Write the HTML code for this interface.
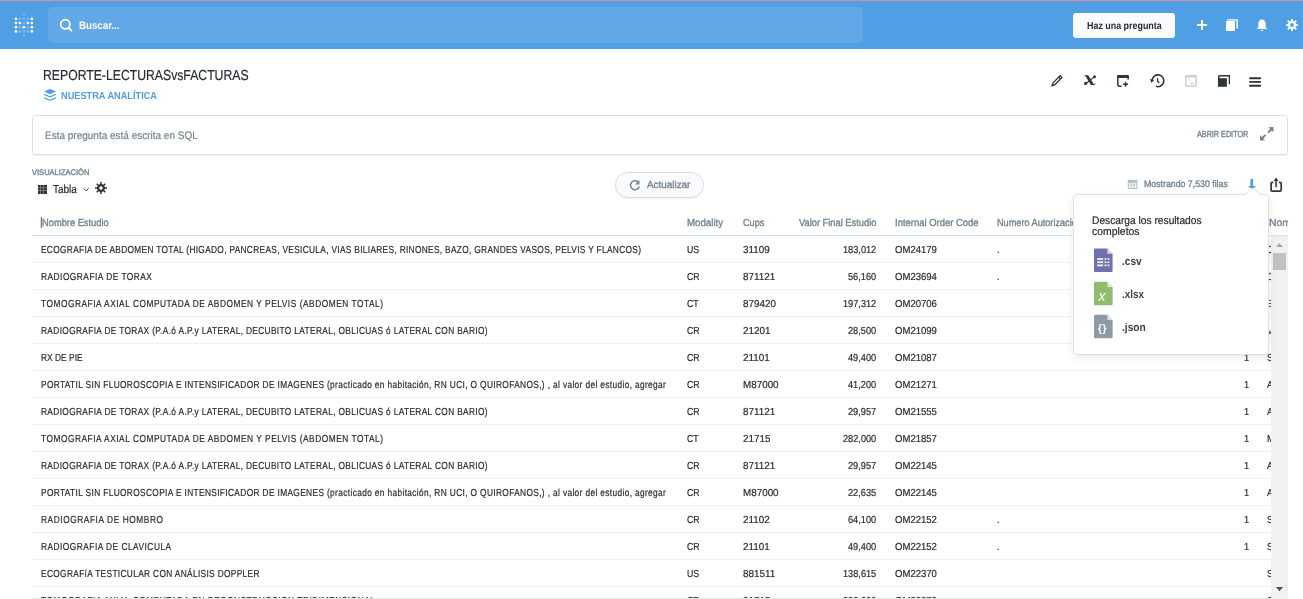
<!DOCTYPE html>
<html><head><meta charset="utf-8"><style>
html,body{margin:0;padding:0;width:1303px;height:599px;overflow:hidden;background:#fff;}
body{position:relative;font-family:"Liberation Sans",sans-serif;}
.t{position:absolute;white-space:nowrap;transform-origin:0 0;text-rendering:geometricPrecision;}
.sk{-webkit-text-stroke:0.2px currentColor;}
.sm{-webkit-text-stroke:0.35px currentColor;}
.rl{position:absolute;height:1px;background:#f0f0f0;}
#pink{position:absolute;left:0;top:0;width:1303px;height:1px;background:#d08fa2;}
#nav{position:absolute;left:0;top:1px;width:1303px;height:48px;background:#509ee3;}
#search{position:absolute;left:48px;top:7px;width:815px;height:36px;border-radius:5px;background:#62a8e6;}
#ask{position:absolute;left:1073px;top:13px;width:102px;height:25px;border-radius:3px;background:#f9fbfc;}
#sql{position:absolute;left:32px;top:115px;width:1254px;height:38px;border:1px solid #dce1e4;border-radius:3px;box-shadow:0 1px 1px rgba(0,0,0,.06);}
#refresh{position:absolute;left:615px;top:172px;width:87px;height:24px;border:1px solid #d9dee2;border-radius:13px;background:#f9fbfc;box-shadow:0 1px 1px rgba(0,0,0,.05);}
#hdrline{z-index:4;position:absolute;left:32px;top:235px;width:1256px;height:1px;background:#dce1e4;}
#sb{z-index:3;position:absolute;left:1271px;top:236px;width:17px;height:363px;background:#f1f1f1;}
#thumb{z-index:3;position:absolute;left:1273px;top:253px;width:13px;height:17px;background:#c1c1c1;}
#botline{position:absolute;left:32px;top:598px;width:1239px;height:1px;background:#e6e6e6;z-index:4;}
#pop{position:absolute;left:1073px;top:194px;width:194px;height:159px;background:#fff;border:1px solid #dfe3e7;border-radius:4px;box-shadow:0 3px 8px rgba(0,0,0,.08);z-index:10;}
#arrow{position:absolute;left:1247.7px;top:190.5px;width:10.6px;height:10.6px;background:#fff;border-left:1px solid #dfe3e7;border-top:1px solid #dfe3e7;transform:rotate(45deg);z-index:11;}
svg.ov{position:absolute;left:0;top:0;}
</style></head><body>
<div id="pink"></div>
<div id="nav"></div>
<div id="search"></div>
<div id="ask"></div>
<div id="sql"></div>
<div id="refresh"></div>
<div class="rl" style="left:32px;top:262px;width:645px"></div>
<div class="rl" style="left:678px;top:262px;width:55px"></div>
<div class="rl" style="left:734px;top:262px;width:54px"></div>
<div class="rl" style="left:789px;top:262px;width:96px"></div>
<div class="rl" style="left:886px;top:262px;width:102px"></div>
<div class="rl" style="left:989px;top:262px;width:107px"></div>
<div class="rl" style="left:1097px;top:262px;width:78px"></div>
<div class="rl" style="left:1176px;top:262px;width:81px"></div>
<div class="rl" style="left:1258px;top:262px;width:13px"></div>
<div class="rl" style="left:32px;top:289px;width:645px"></div>
<div class="rl" style="left:678px;top:289px;width:55px"></div>
<div class="rl" style="left:734px;top:289px;width:54px"></div>
<div class="rl" style="left:789px;top:289px;width:96px"></div>
<div class="rl" style="left:886px;top:289px;width:102px"></div>
<div class="rl" style="left:989px;top:289px;width:107px"></div>
<div class="rl" style="left:1097px;top:289px;width:78px"></div>
<div class="rl" style="left:1176px;top:289px;width:81px"></div>
<div class="rl" style="left:1258px;top:289px;width:13px"></div>
<div class="rl" style="left:32px;top:316px;width:645px"></div>
<div class="rl" style="left:678px;top:316px;width:55px"></div>
<div class="rl" style="left:734px;top:316px;width:54px"></div>
<div class="rl" style="left:789px;top:316px;width:96px"></div>
<div class="rl" style="left:886px;top:316px;width:102px"></div>
<div class="rl" style="left:989px;top:316px;width:107px"></div>
<div class="rl" style="left:1097px;top:316px;width:78px"></div>
<div class="rl" style="left:1176px;top:316px;width:81px"></div>
<div class="rl" style="left:1258px;top:316px;width:13px"></div>
<div class="rl" style="left:32px;top:343px;width:645px"></div>
<div class="rl" style="left:678px;top:343px;width:55px"></div>
<div class="rl" style="left:734px;top:343px;width:54px"></div>
<div class="rl" style="left:789px;top:343px;width:96px"></div>
<div class="rl" style="left:886px;top:343px;width:102px"></div>
<div class="rl" style="left:989px;top:343px;width:107px"></div>
<div class="rl" style="left:1097px;top:343px;width:78px"></div>
<div class="rl" style="left:1176px;top:343px;width:81px"></div>
<div class="rl" style="left:1258px;top:343px;width:13px"></div>
<div class="rl" style="left:32px;top:370px;width:645px"></div>
<div class="rl" style="left:678px;top:370px;width:55px"></div>
<div class="rl" style="left:734px;top:370px;width:54px"></div>
<div class="rl" style="left:789px;top:370px;width:96px"></div>
<div class="rl" style="left:886px;top:370px;width:102px"></div>
<div class="rl" style="left:989px;top:370px;width:107px"></div>
<div class="rl" style="left:1097px;top:370px;width:78px"></div>
<div class="rl" style="left:1176px;top:370px;width:81px"></div>
<div class="rl" style="left:1258px;top:370px;width:13px"></div>
<div class="rl" style="left:32px;top:397px;width:645px"></div>
<div class="rl" style="left:678px;top:397px;width:55px"></div>
<div class="rl" style="left:734px;top:397px;width:54px"></div>
<div class="rl" style="left:789px;top:397px;width:96px"></div>
<div class="rl" style="left:886px;top:397px;width:102px"></div>
<div class="rl" style="left:989px;top:397px;width:107px"></div>
<div class="rl" style="left:1097px;top:397px;width:78px"></div>
<div class="rl" style="left:1176px;top:397px;width:81px"></div>
<div class="rl" style="left:1258px;top:397px;width:13px"></div>
<div class="rl" style="left:32px;top:424px;width:645px"></div>
<div class="rl" style="left:678px;top:424px;width:55px"></div>
<div class="rl" style="left:734px;top:424px;width:54px"></div>
<div class="rl" style="left:789px;top:424px;width:96px"></div>
<div class="rl" style="left:886px;top:424px;width:102px"></div>
<div class="rl" style="left:989px;top:424px;width:107px"></div>
<div class="rl" style="left:1097px;top:424px;width:78px"></div>
<div class="rl" style="left:1176px;top:424px;width:81px"></div>
<div class="rl" style="left:1258px;top:424px;width:13px"></div>
<div class="rl" style="left:32px;top:451px;width:645px"></div>
<div class="rl" style="left:678px;top:451px;width:55px"></div>
<div class="rl" style="left:734px;top:451px;width:54px"></div>
<div class="rl" style="left:789px;top:451px;width:96px"></div>
<div class="rl" style="left:886px;top:451px;width:102px"></div>
<div class="rl" style="left:989px;top:451px;width:107px"></div>
<div class="rl" style="left:1097px;top:451px;width:78px"></div>
<div class="rl" style="left:1176px;top:451px;width:81px"></div>
<div class="rl" style="left:1258px;top:451px;width:13px"></div>
<div class="rl" style="left:32px;top:478px;width:645px"></div>
<div class="rl" style="left:678px;top:478px;width:55px"></div>
<div class="rl" style="left:734px;top:478px;width:54px"></div>
<div class="rl" style="left:789px;top:478px;width:96px"></div>
<div class="rl" style="left:886px;top:478px;width:102px"></div>
<div class="rl" style="left:989px;top:478px;width:107px"></div>
<div class="rl" style="left:1097px;top:478px;width:78px"></div>
<div class="rl" style="left:1176px;top:478px;width:81px"></div>
<div class="rl" style="left:1258px;top:478px;width:13px"></div>
<div class="rl" style="left:32px;top:505px;width:645px"></div>
<div class="rl" style="left:678px;top:505px;width:55px"></div>
<div class="rl" style="left:734px;top:505px;width:54px"></div>
<div class="rl" style="left:789px;top:505px;width:96px"></div>
<div class="rl" style="left:886px;top:505px;width:102px"></div>
<div class="rl" style="left:989px;top:505px;width:107px"></div>
<div class="rl" style="left:1097px;top:505px;width:78px"></div>
<div class="rl" style="left:1176px;top:505px;width:81px"></div>
<div class="rl" style="left:1258px;top:505px;width:13px"></div>
<div class="rl" style="left:32px;top:532px;width:645px"></div>
<div class="rl" style="left:678px;top:532px;width:55px"></div>
<div class="rl" style="left:734px;top:532px;width:54px"></div>
<div class="rl" style="left:789px;top:532px;width:96px"></div>
<div class="rl" style="left:886px;top:532px;width:102px"></div>
<div class="rl" style="left:989px;top:532px;width:107px"></div>
<div class="rl" style="left:1097px;top:532px;width:78px"></div>
<div class="rl" style="left:1176px;top:532px;width:81px"></div>
<div class="rl" style="left:1258px;top:532px;width:13px"></div>
<div class="rl" style="left:32px;top:559px;width:645px"></div>
<div class="rl" style="left:678px;top:559px;width:55px"></div>
<div class="rl" style="left:734px;top:559px;width:54px"></div>
<div class="rl" style="left:789px;top:559px;width:96px"></div>
<div class="rl" style="left:886px;top:559px;width:102px"></div>
<div class="rl" style="left:989px;top:559px;width:107px"></div>
<div class="rl" style="left:1097px;top:559px;width:78px"></div>
<div class="rl" style="left:1176px;top:559px;width:81px"></div>
<div class="rl" style="left:1258px;top:559px;width:13px"></div>
<div class="rl" style="left:32px;top:586px;width:645px"></div>
<div class="rl" style="left:678px;top:586px;width:55px"></div>
<div class="rl" style="left:734px;top:586px;width:54px"></div>
<div class="rl" style="left:789px;top:586px;width:96px"></div>
<div class="rl" style="left:886px;top:586px;width:102px"></div>
<div class="rl" style="left:989px;top:586px;width:107px"></div>
<div class="rl" style="left:1097px;top:586px;width:78px"></div>
<div class="rl" style="left:1176px;top:586px;width:81px"></div>
<div class="rl" style="left:1258px;top:586px;width:13px"></div>
<div class="rl" style="left:32px;top:613px;width:645px"></div>
<div class="rl" style="left:678px;top:613px;width:55px"></div>
<div class="rl" style="left:734px;top:613px;width:54px"></div>
<div class="rl" style="left:789px;top:613px;width:96px"></div>
<div class="rl" style="left:886px;top:613px;width:102px"></div>
<div class="rl" style="left:989px;top:613px;width:107px"></div>
<div class="rl" style="left:1097px;top:613px;width:78px"></div>
<div class="rl" style="left:1176px;top:613px;width:81px"></div>
<div class="rl" style="left:1258px;top:613px;width:13px"></div>
<div id="hdrline"></div>
<div id="botline"></div>
<div id="sb"></div>
<div id="thumb"></div>
<div style="position:absolute;left:1288px;top:200px;width:15px;height:399px;background:#fff;z-index:4"></div>
<div style="position:absolute;left:0;top:0;width:1303px;height:599px;will-change:transform">
<div class="t" style="left:78.50px;top:19.97px;font-size:10.76px;line-height:13px;font-weight:700;color:#fff;transform:scaleX(0.9034);">Buscar...</div>
<div class="t" style="left:1087.00px;top:19.58px;font-size:10.17px;line-height:13px;font-weight:700;color:#262c31;transform:scaleX(0.8766);">Haz una pregunta</div>
<div class="t sk" style="left:43.36px;top:66.77px;font-size:14.53px;line-height:18px;font-weight:400;color:#262c31;transform:scaleX(0.8421);">REPORTE-LECTURASvsFACTURAS</div>
<div class="t" style="left:61.40px;top:89.58px;font-size:10.17px;line-height:13px;font-weight:700;color:#509ee3;transform:scaleX(0.9068);">NUESTRA ANALÍTICA</div>
<div class="t sk" style="left:45.00px;top:128.82px;font-size:10.9px;line-height:14px;font-weight:400;color:#74838f;transform:scaleX(0.9175);">Esta pregunta está escrita en SQL</div>
<div class="t sm" style="left:1196.50px;top:129.08px;font-size:8.72px;line-height:11px;font-weight:400;color:#74838f;transform:scaleX(0.8286);">ABRIR EDITOR</div>
<div class="t sm" style="left:31.50px;top:167.68px;font-size:8.14px;line-height:10px;font-weight:400;color:#74838f;transform:scaleX(0.9276);">VISUALIZACIÓN</div>
<div class="t sk" style="left:53.00px;top:182.27px;font-size:11.63px;line-height:15px;font-weight:400;color:#262c31;transform:scaleX(0.8579);">Tabla</div>
<div class="t sm" style="left:646.80px;top:178.58px;font-size:10.17px;line-height:13px;font-weight:400;color:#74838f;transform:scaleX(0.9732);">Actualizar</div>
<div class="t sm" style="left:1143.50px;top:179.08px;font-size:9.59px;line-height:12px;font-weight:400;color:#74838f;transform:scaleX(0.9152);">Mostrando 7,530 filas</div>
<div class="t sm" style="left:41.50px;top:216.58px;font-size:10.17px;line-height:13px;font-weight:400;color:#74838f;transform:scaleX(0.9157);">Nombre Estudio</div>
<div class="t sm" style="left:687.00px;top:216.58px;font-size:10.17px;line-height:13px;font-weight:400;color:#74838f;transform:scaleX(0.9551);">Modality</div>
<div class="t sm" style="left:743.00px;top:216.58px;font-size:10.17px;line-height:13px;font-weight:400;color:#74838f;transform:scaleX(0.9000);">Cups</div>
<div class="t sm" style="left:798.50px;top:216.58px;font-size:10.17px;line-height:13px;font-weight:400;color:#74838f;transform:scaleX(0.9159);">Valor Final Estudio</div>
<div class="t sm" style="left:894.70px;top:216.58px;font-size:10.17px;line-height:13px;font-weight:400;color:#74838f;transform:scaleX(0.9311);">Internal Order Code</div>
<div class="t sm" style="left:997.00px;top:216.58px;font-size:10.17px;line-height:13px;font-weight:400;color:#74838f;transform:scaleX(0.9000);">Numero Autorización</div>
<div class="t sm" style="left:1268.60px;top:216.58px;font-size:10.17px;line-height:13px;font-weight:400;color:#74838f;transform:scaleX(1.0200);">Nombre</div>
<div class="t sk" style="left:41.30px;top:243.68px;font-size:10.17px;line-height:13px;font-weight:400;color:#262c31;transform:scaleX(0.8200);letter-spacing:0.389px;">ECOGRAFIA DE ABDOMEN TOTAL (HIGADO, PANCREAS, VESICULA, VIAS BILIARES, RINONES, BAZO, GRANDES VASOS, PELVIS Y FLANCOS)</div>
<div class="t sk" style="left:687.00px;top:243.68px;font-size:10.17px;line-height:13px;font-weight:400;color:#262c31;transform:scaleX(0.8600);">US</div>
<div class="t sk" style="left:743.00px;top:243.68px;font-size:10.17px;line-height:13px;font-weight:400;color:#262c31;transform:scaleX(0.9700);">31109</div>
<div class="t sk" style="left:842.66px;top:243.68px;font-size:10.17px;line-height:13px;font-weight:400;color:#262c31;transform:scaleX(0.9050);">183,012</div>
<div class="t sk" style="left:894.70px;top:243.68px;font-size:10.17px;line-height:13px;font-weight:400;color:#262c31;transform:scaleX(0.9400);">OM24179</div>
<div class="t sk" style="left:997.00px;top:243.68px;font-size:10.17px;line-height:13px;font-weight:400;color:#262c31;transform:scaleX(0.9100);">.</div>
<div class="t sk" style="left:1267.20px;top:243.68px;font-size:10.17px;line-height:13px;font-weight:400;color:#262c31;transform:scaleX(0.9100);">C</div>
<div class="t sk" style="left:41.30px;top:270.68px;font-size:10.17px;line-height:13px;font-weight:400;color:#262c31;transform:scaleX(0.8200);letter-spacing:0.603px;">RADIOGRAFIA DE TORAX</div>
<div class="t sk" style="left:687.00px;top:270.68px;font-size:10.17px;line-height:13px;font-weight:400;color:#262c31;transform:scaleX(0.8600);">CR</div>
<div class="t sk" style="left:743.00px;top:270.68px;font-size:10.17px;line-height:13px;font-weight:400;color:#262c31;transform:scaleX(0.9700);">871121</div>
<div class="t sk" style="left:847.77px;top:270.68px;font-size:10.17px;line-height:13px;font-weight:400;color:#262c31;transform:scaleX(0.9050);">56,160</div>
<div class="t sk" style="left:894.70px;top:270.68px;font-size:10.17px;line-height:13px;font-weight:400;color:#262c31;transform:scaleX(0.9400);">OM23694</div>
<div class="t sk" style="left:997.00px;top:270.68px;font-size:10.17px;line-height:13px;font-weight:400;color:#262c31;transform:scaleX(0.9100);">.</div>
<div class="t sk" style="left:1267.20px;top:270.68px;font-size:10.17px;line-height:13px;font-weight:400;color:#262c31;transform:scaleX(0.9100);">C</div>
<div class="t sk" style="left:41.30px;top:297.68px;font-size:10.17px;line-height:13px;font-weight:400;color:#262c31;transform:scaleX(0.8200);letter-spacing:0.651px;">TOMOGRAFIA AXIAL COMPUTADA DE ABDOMEN Y PELVIS (ABDOMEN TOTAL)</div>
<div class="t sk" style="left:687.00px;top:297.68px;font-size:10.17px;line-height:13px;font-weight:400;color:#262c31;transform:scaleX(0.8600);">CT</div>
<div class="t sk" style="left:743.00px;top:297.68px;font-size:10.17px;line-height:13px;font-weight:400;color:#262c31;transform:scaleX(0.9700);">879420</div>
<div class="t sk" style="left:842.66px;top:297.68px;font-size:10.17px;line-height:13px;font-weight:400;color:#262c31;transform:scaleX(0.9050);">197,312</div>
<div class="t sk" style="left:894.70px;top:297.68px;font-size:10.17px;line-height:13px;font-weight:400;color:#262c31;transform:scaleX(0.9400);">OM20706</div>
<div class="t sk" style="left:1267.20px;top:297.68px;font-size:10.17px;line-height:13px;font-weight:400;color:#262c31;transform:scaleX(0.9100);">E</div>
<div class="t sk" style="left:41.30px;top:324.68px;font-size:10.17px;line-height:13px;font-weight:400;color:#262c31;transform:scaleX(0.8200);letter-spacing:0.427px;">RADIOGRAFIA DE TORAX (P.A.ó A.P.y LATERAL, DECUBITO LATERAL, OBLICUAS ó LATERAL CON BARIO)</div>
<div class="t sk" style="left:687.00px;top:324.68px;font-size:10.17px;line-height:13px;font-weight:400;color:#262c31;transform:scaleX(0.8600);">CR</div>
<div class="t sk" style="left:743.00px;top:324.68px;font-size:10.17px;line-height:13px;font-weight:400;color:#262c31;transform:scaleX(0.9700);">21201</div>
<div class="t sk" style="left:847.77px;top:324.68px;font-size:10.17px;line-height:13px;font-weight:400;color:#262c31;transform:scaleX(0.9050);">28,500</div>
<div class="t sk" style="left:894.70px;top:324.68px;font-size:10.17px;line-height:13px;font-weight:400;color:#262c31;transform:scaleX(0.9400);">OM21099</div>
<div class="t sk" style="left:1267.20px;top:324.68px;font-size:10.17px;line-height:13px;font-weight:400;color:#262c31;transform:scaleX(0.9100);">V</div>
<div class="t sk" style="left:41.30px;top:351.68px;font-size:10.17px;line-height:13px;font-weight:400;color:#262c31;transform:scaleX(0.8200);letter-spacing:0.065px;">RX DE PIE</div>
<div class="t sk" style="left:687.00px;top:351.68px;font-size:10.17px;line-height:13px;font-weight:400;color:#262c31;transform:scaleX(0.8600);">CR</div>
<div class="t sk" style="left:743.00px;top:351.68px;font-size:10.17px;line-height:13px;font-weight:400;color:#262c31;transform:scaleX(0.9700);">21101</div>
<div class="t sk" style="left:847.77px;top:351.68px;font-size:10.17px;line-height:13px;font-weight:400;color:#262c31;transform:scaleX(0.9050);">49,400</div>
<div class="t sk" style="left:894.70px;top:351.68px;font-size:10.17px;line-height:13px;font-weight:400;color:#262c31;transform:scaleX(0.9400);">OM21087</div>
<div class="t sk" style="left:1243.54px;top:351.68px;font-size:10.17px;line-height:13px;font-weight:400;color:#262c31;transform:scaleX(0.9100);">1</div>
<div class="t sk" style="left:1267.20px;top:351.68px;font-size:10.17px;line-height:13px;font-weight:400;color:#262c31;transform:scaleX(0.9100);">S</div>
<div class="t sk" style="left:41.30px;top:378.68px;font-size:10.17px;line-height:13px;font-weight:400;color:#262c31;transform:scaleX(0.8200);letter-spacing:0.438px;">PORTATIL SIN FLUOROSCOPIA E INTENSIFICADOR DE IMAGENES (practicado en habitación, RN UCI, O QUIROFANOS,) , al valor del estudio, agregar</div>
<div class="t sk" style="left:687.00px;top:378.68px;font-size:10.17px;line-height:13px;font-weight:400;color:#262c31;transform:scaleX(0.8600);">CR</div>
<div class="t sk" style="left:743.00px;top:378.68px;font-size:10.17px;line-height:13px;font-weight:400;color:#262c31;transform:scaleX(0.9700);">M87000</div>
<div class="t sk" style="left:847.77px;top:378.68px;font-size:10.17px;line-height:13px;font-weight:400;color:#262c31;transform:scaleX(0.9050);">41,200</div>
<div class="t sk" style="left:894.70px;top:378.68px;font-size:10.17px;line-height:13px;font-weight:400;color:#262c31;transform:scaleX(0.9400);">OM21271</div>
<div class="t sk" style="left:1243.54px;top:378.68px;font-size:10.17px;line-height:13px;font-weight:400;color:#262c31;transform:scaleX(0.9100);">1</div>
<div class="t sk" style="left:1267.20px;top:378.68px;font-size:10.17px;line-height:13px;font-weight:400;color:#262c31;transform:scaleX(0.9100);">A</div>
<div class="t sk" style="left:41.30px;top:405.68px;font-size:10.17px;line-height:13px;font-weight:400;color:#262c31;transform:scaleX(0.8200);letter-spacing:0.427px;">RADIOGRAFIA DE TORAX (P.A.ó A.P.y LATERAL, DECUBITO LATERAL, OBLICUAS ó LATERAL CON BARIO)</div>
<div class="t sk" style="left:687.00px;top:405.68px;font-size:10.17px;line-height:13px;font-weight:400;color:#262c31;transform:scaleX(0.8600);">CR</div>
<div class="t sk" style="left:743.00px;top:405.68px;font-size:10.17px;line-height:13px;font-weight:400;color:#262c31;transform:scaleX(0.9700);">871121</div>
<div class="t sk" style="left:847.77px;top:405.68px;font-size:10.17px;line-height:13px;font-weight:400;color:#262c31;transform:scaleX(0.9050);">29,957</div>
<div class="t sk" style="left:894.70px;top:405.68px;font-size:10.17px;line-height:13px;font-weight:400;color:#262c31;transform:scaleX(0.9400);">OM21555</div>
<div class="t sk" style="left:1243.54px;top:405.68px;font-size:10.17px;line-height:13px;font-weight:400;color:#262c31;transform:scaleX(0.9100);">1</div>
<div class="t sk" style="left:1267.20px;top:405.68px;font-size:10.17px;line-height:13px;font-weight:400;color:#262c31;transform:scaleX(0.9100);">A</div>
<div class="t sk" style="left:41.30px;top:432.68px;font-size:10.17px;line-height:13px;font-weight:400;color:#262c31;transform:scaleX(0.8200);letter-spacing:0.651px;">TOMOGRAFIA AXIAL COMPUTADA DE ABDOMEN Y PELVIS (ABDOMEN TOTAL)</div>
<div class="t sk" style="left:687.00px;top:432.68px;font-size:10.17px;line-height:13px;font-weight:400;color:#262c31;transform:scaleX(0.8600);">CT</div>
<div class="t sk" style="left:743.00px;top:432.68px;font-size:10.17px;line-height:13px;font-weight:400;color:#262c31;transform:scaleX(0.9700);">21715</div>
<div class="t sk" style="left:842.66px;top:432.68px;font-size:10.17px;line-height:13px;font-weight:400;color:#262c31;transform:scaleX(0.9050);">282,000</div>
<div class="t sk" style="left:894.70px;top:432.68px;font-size:10.17px;line-height:13px;font-weight:400;color:#262c31;transform:scaleX(0.9400);">OM21857</div>
<div class="t sk" style="left:1243.54px;top:432.68px;font-size:10.17px;line-height:13px;font-weight:400;color:#262c31;transform:scaleX(0.9100);">1</div>
<div class="t sk" style="left:1267.20px;top:432.68px;font-size:10.17px;line-height:13px;font-weight:400;color:#262c31;transform:scaleX(0.9100);">M</div>
<div class="t sk" style="left:41.30px;top:459.68px;font-size:10.17px;line-height:13px;font-weight:400;color:#262c31;transform:scaleX(0.8200);letter-spacing:0.427px;">RADIOGRAFIA DE TORAX (P.A.ó A.P.y LATERAL, DECUBITO LATERAL, OBLICUAS ó LATERAL CON BARIO)</div>
<div class="t sk" style="left:687.00px;top:459.68px;font-size:10.17px;line-height:13px;font-weight:400;color:#262c31;transform:scaleX(0.8600);">CR</div>
<div class="t sk" style="left:743.00px;top:459.68px;font-size:10.17px;line-height:13px;font-weight:400;color:#262c31;transform:scaleX(0.9700);">871121</div>
<div class="t sk" style="left:847.77px;top:459.68px;font-size:10.17px;line-height:13px;font-weight:400;color:#262c31;transform:scaleX(0.9050);">29,957</div>
<div class="t sk" style="left:894.70px;top:459.68px;font-size:10.17px;line-height:13px;font-weight:400;color:#262c31;transform:scaleX(0.9400);">OM22145</div>
<div class="t sk" style="left:1243.54px;top:459.68px;font-size:10.17px;line-height:13px;font-weight:400;color:#262c31;transform:scaleX(0.9100);">1</div>
<div class="t sk" style="left:1267.20px;top:459.68px;font-size:10.17px;line-height:13px;font-weight:400;color:#262c31;transform:scaleX(0.9100);">A</div>
<div class="t sk" style="left:41.30px;top:486.68px;font-size:10.17px;line-height:13px;font-weight:400;color:#262c31;transform:scaleX(0.8200);letter-spacing:0.438px;">PORTATIL SIN FLUOROSCOPIA E INTENSIFICADOR DE IMAGENES (practicado en habitación, RN UCI, O QUIROFANOS,) , al valor del estudio, agregar</div>
<div class="t sk" style="left:687.00px;top:486.68px;font-size:10.17px;line-height:13px;font-weight:400;color:#262c31;transform:scaleX(0.8600);">CR</div>
<div class="t sk" style="left:743.00px;top:486.68px;font-size:10.17px;line-height:13px;font-weight:400;color:#262c31;transform:scaleX(0.9700);">M87000</div>
<div class="t sk" style="left:847.77px;top:486.68px;font-size:10.17px;line-height:13px;font-weight:400;color:#262c31;transform:scaleX(0.9050);">22,635</div>
<div class="t sk" style="left:894.70px;top:486.68px;font-size:10.17px;line-height:13px;font-weight:400;color:#262c31;transform:scaleX(0.9400);">OM22145</div>
<div class="t sk" style="left:1243.54px;top:486.68px;font-size:10.17px;line-height:13px;font-weight:400;color:#262c31;transform:scaleX(0.9100);">1</div>
<div class="t sk" style="left:1267.20px;top:486.68px;font-size:10.17px;line-height:13px;font-weight:400;color:#262c31;transform:scaleX(0.9100);">A</div>
<div class="t sk" style="left:41.30px;top:513.68px;font-size:10.17px;line-height:13px;font-weight:400;color:#262c31;transform:scaleX(0.8200);letter-spacing:0.693px;">RADIOGRAFIA DE HOMBRO</div>
<div class="t sk" style="left:687.00px;top:513.68px;font-size:10.17px;line-height:13px;font-weight:400;color:#262c31;transform:scaleX(0.8600);">CR</div>
<div class="t sk" style="left:743.00px;top:513.68px;font-size:10.17px;line-height:13px;font-weight:400;color:#262c31;transform:scaleX(0.9700);">21102</div>
<div class="t sk" style="left:847.77px;top:513.68px;font-size:10.17px;line-height:13px;font-weight:400;color:#262c31;transform:scaleX(0.9050);">64,100</div>
<div class="t sk" style="left:894.70px;top:513.68px;font-size:10.17px;line-height:13px;font-weight:400;color:#262c31;transform:scaleX(0.9400);">OM22152</div>
<div class="t sk" style="left:997.00px;top:513.68px;font-size:10.17px;line-height:13px;font-weight:400;color:#262c31;transform:scaleX(0.9100);">.</div>
<div class="t sk" style="left:1243.54px;top:513.68px;font-size:10.17px;line-height:13px;font-weight:400;color:#262c31;transform:scaleX(0.9100);">1</div>
<div class="t sk" style="left:1267.20px;top:513.68px;font-size:10.17px;line-height:13px;font-weight:400;color:#262c31;transform:scaleX(0.9100);">S</div>
<div class="t sk" style="left:41.30px;top:540.68px;font-size:10.17px;line-height:13px;font-weight:400;color:#262c31;transform:scaleX(0.8200);letter-spacing:0.598px;">RADIOGRAFIA DE CLAVICULA</div>
<div class="t sk" style="left:687.00px;top:540.68px;font-size:10.17px;line-height:13px;font-weight:400;color:#262c31;transform:scaleX(0.8600);">CR</div>
<div class="t sk" style="left:743.00px;top:540.68px;font-size:10.17px;line-height:13px;font-weight:400;color:#262c31;transform:scaleX(0.9700);">21101</div>
<div class="t sk" style="left:847.77px;top:540.68px;font-size:10.17px;line-height:13px;font-weight:400;color:#262c31;transform:scaleX(0.9050);">49,400</div>
<div class="t sk" style="left:894.70px;top:540.68px;font-size:10.17px;line-height:13px;font-weight:400;color:#262c31;transform:scaleX(0.9400);">OM22152</div>
<div class="t sk" style="left:997.00px;top:540.68px;font-size:10.17px;line-height:13px;font-weight:400;color:#262c31;transform:scaleX(0.9100);">.</div>
<div class="t sk" style="left:1243.54px;top:540.68px;font-size:10.17px;line-height:13px;font-weight:400;color:#262c31;transform:scaleX(0.9100);">1</div>
<div class="t sk" style="left:1267.20px;top:540.68px;font-size:10.17px;line-height:13px;font-weight:400;color:#262c31;transform:scaleX(0.9100);">S</div>
<div class="t sk" style="left:41.30px;top:567.68px;font-size:10.17px;line-height:13px;font-weight:400;color:#262c31;transform:scaleX(0.8200);letter-spacing:0.416px;">ECOGRAFíA TESTICULAR CON ANÁLISIS DOPPLER</div>
<div class="t sk" style="left:687.00px;top:567.68px;font-size:10.17px;line-height:13px;font-weight:400;color:#262c31;transform:scaleX(0.8600);">US</div>
<div class="t sk" style="left:743.00px;top:567.68px;font-size:10.17px;line-height:13px;font-weight:400;color:#262c31;transform:scaleX(0.9700);">881511</div>
<div class="t sk" style="left:842.66px;top:567.68px;font-size:10.17px;line-height:13px;font-weight:400;color:#262c31;transform:scaleX(0.9050);">138,615</div>
<div class="t sk" style="left:894.70px;top:567.68px;font-size:10.17px;line-height:13px;font-weight:400;color:#262c31;transform:scaleX(0.9400);">OM22370</div>
<div class="t sk" style="left:1267.20px;top:567.68px;font-size:10.17px;line-height:13px;font-weight:400;color:#262c31;transform:scaleX(0.9100);">S</div>
<div class="t sk" style="left:41.30px;top:594.68px;font-size:10.17px;line-height:13px;font-weight:400;color:#262c31;transform:scaleX(0.8200);letter-spacing:0.634px;">TOMOGRAFIA AXIAL COMPUTADA EN RECONSTRUCCION TRIDIMENSIONAL</div>
<div class="t sk" style="left:687.00px;top:594.68px;font-size:10.17px;line-height:13px;font-weight:400;color:#262c31;transform:scaleX(0.8600);">CT</div>
<div class="t sk" style="left:743.00px;top:594.68px;font-size:10.17px;line-height:13px;font-weight:400;color:#262c31;transform:scaleX(0.9700);">21715</div>
<div class="t sk" style="left:842.66px;top:594.68px;font-size:10.17px;line-height:13px;font-weight:400;color:#262c31;transform:scaleX(0.9050);">282,000</div>
<div class="t sk" style="left:894.70px;top:594.68px;font-size:10.17px;line-height:13px;font-weight:400;color:#262c31;transform:scaleX(0.9400);">OM22370</div>
<div class="t sk" style="left:1267.20px;top:594.68px;font-size:10.17px;line-height:13px;font-weight:400;color:#262c31;transform:scaleX(0.9100);">S</div>
</div>
<svg class="ov" width="1303" height="599" viewBox="0 0 1303 599" style="z-index:5"><circle cx="23.9" cy="14.5" r="1.35" fill="#fff" opacity="0.25"/><circle cx="15.9" cy="18.8" r="1.35" fill="#fff"/><circle cx="19.9" cy="18.8" r="1.35" fill="#fff" opacity="0.25"/><circle cx="23.9" cy="18.8" r="1.35" fill="#fff" opacity="0.25"/><circle cx="27.9" cy="18.8" r="1.35" fill="#fff" opacity="0.25"/><circle cx="31.9" cy="18.8" r="1.35" fill="#fff"/><circle cx="15.9" cy="23.0" r="1.35" fill="#fff"/><circle cx="19.9" cy="23.0" r="1.35" fill="#fff"/><circle cx="23.9" cy="23.0" r="1.35" fill="#fff" opacity="0.25"/><circle cx="27.9" cy="23.0" r="1.35" fill="#fff"/><circle cx="31.9" cy="23.0" r="1.35" fill="#fff"/><circle cx="15.9" cy="27.2" r="1.35" fill="#fff"/><circle cx="19.9" cy="27.2" r="1.35" fill="#fff" opacity="0.25"/><circle cx="23.9" cy="27.2" r="1.35" fill="#fff"/><circle cx="27.9" cy="27.2" r="1.35" fill="#fff" opacity="0.25"/><circle cx="31.9" cy="27.2" r="1.35" fill="#fff"/><circle cx="15.9" cy="31.4" r="1.35" fill="#fff"/><circle cx="19.9" cy="31.4" r="1.35" fill="#fff" opacity="0.25"/><circle cx="23.9" cy="31.4" r="1.35" fill="#fff" opacity="0.25"/><circle cx="27.9" cy="31.4" r="1.35" fill="#fff" opacity="0.25"/><circle cx="31.9" cy="31.4" r="1.35" fill="#fff"/><circle cx="23.9" cy="35.6" r="1.35" fill="#fff" opacity="0.25"/><circle cx="65.3" cy="24.3" r="4.6" fill="none" stroke="#fff" stroke-width="1.7"/><line x1="68.7" y1="27.8" x2="71.4" y2="30.5" stroke="#fff" stroke-width="1.8" stroke-linecap="round"/><path d="M1202,20 V30 M1197,25 H1207" stroke="#fff" stroke-width="2"/><rect x="1226" y="21" width="9" height="10" fill="#fff"/><path d="M1227.2,19.9 H1237.2 V28.5" fill="none" stroke="#fff" stroke-width="1.4"/><path d="M1262,19.2 C1259.2,19.6 1258.3,22 1258.3,24.5 V27.2 L1256.7,29 H1267.3 L1265.7,27.2 V24.5 C1265.7,22 1264.8,19.6 1262,19.2Z" fill="#fff"/><rect x="1260.6" y="29.9" width="2.8" height="1" rx="0.5" fill="#fff"/><path d="M1296.01,24.14 L1298.03,24.08 L1298.03,25.92 L1296.01,25.86 L1295.44,27.22 L1296.91,28.62 L1295.62,29.91 L1294.22,28.44 L1292.86,29.01 L1292.92,31.03 L1291.08,31.03 L1291.14,29.01 L1289.78,28.44 L1288.38,29.91 L1287.09,28.62 L1288.56,27.22 L1287.99,25.86 L1285.97,25.92 L1285.97,24.08 L1287.99,24.14 L1288.56,22.78 L1287.09,21.38 L1288.38,20.09 L1289.78,21.56 L1291.14,20.99 L1291.08,18.97 L1292.92,18.97 L1292.86,20.99 L1294.22,21.56 L1295.62,20.09 L1296.91,21.38 L1295.44,22.78Z M1293.9,25 A1.9,1.9 0 1,0 1290.1,25 A1.9,1.9 0 1,0 1293.9,25Z" fill="#fff" fill-rule="evenodd"/><path d="M50,89 L56,91.6 L50,94.2 L44,91.6Z" fill="#509ee3"/><path d="M44.3,93.8 L50,96.3 L55.7,93.8 L56,95 L50,97.6 L44,95Z" fill="#509ee3"/><path d="M44.3,97.2 L50,99.7 L55.7,97.2 L56,98.4 L50,101 L44,98.4Z" fill="#509ee3"/><path d="M1051.9,85.9 L1054.9,84.7 L1061.9,77.6 L1060.1,75.8 L1053.1,82.9Z" fill="none" stroke="#2e353b" stroke-width="1.35" stroke-linejoin="round"/><path d="M1058.7,77.2 L1060.5,79.0" stroke="#2e353b" stroke-width="1.2"/><path d="M1084.9,75.2 L1088.2,75.2 L1094.3,84.9 L1091.0,84.9Z" fill="#2e353b"/><path d="M1084.3,76.4 Q1084.9,75.3 1086.2,75.3 M1093,84.9 Q1094.9,84.9 1095.4,83.4" fill="none" stroke="#2e353b" stroke-width="0.9"/><path d="M1094.5,76.6 L1085.7,83.7" stroke="#2e353b" stroke-width="1.2"/><circle cx="1094.5" cy="76.8" r="1.5" fill="#2e353b"/><circle cx="1085.6" cy="83.4" r="1.6" fill="#2e353b"/><path d="M1121.6,86.15 H1119.1 Q1117.85,86.15 1117.85,84.9 V77 Q1117.85,75.85 1119,75.85 H1127 Q1128.15,75.85 1128.15,77 V79.6" fill="none" stroke="#2e353b" stroke-width="1.5"/><rect x="1117.1" y="75.1" width="11.8" height="2.8" rx="1" fill="#2e353b"/><path d="M1125.6,81.8 V86.8 M1123.1,84.3 H1128.1" stroke="#2e353b" stroke-width="1.5"/><path d="M1152.09,79.78 A5.9,5.9 0 1,1 1155.9,86.35" fill="none" stroke="#2e353b" stroke-width="1.6"/><path d="M1150.0,79.1 L1154.2,79.9 L1151.5,83.0Z" fill="#2e353b"/><path d="M1157.6,78.3 V81.2 L1159.3,82.9" fill="none" stroke="#2e353b" stroke-width="1.4"/><rect x="1185.8" y="75.8" width="10.4" height="10.4" rx="1.2" fill="none" stroke="#c7cfd4" stroke-width="1.5"/><rect x="1185.5" y="75.2" width="11" height="2.2" rx="1" fill="#c7cfd4"/><path d="M1188.1,78.8 L1189.3,79.8 L1188.1,80.8" fill="none" stroke="#c7cfd4" stroke-width="0.8"/><rect x="1190.2" y="83.1" width="4" height="1" fill="#c7cfd4"/><rect x="1218" y="78.2" width="8.9" height="8.6" fill="#2e353b"/><path d="M1218,86 V76.5 Q1218,75 1219.5,75 H1230 V84.2 H1228.7 V76.4 H1220.6 Q1219.4,76.4 1219.4,77.6 V78.2" fill="#2e353b"/><path d="M1250,78.2 H1260.2 M1250,81.9 H1260.2 M1250,85.7 H1260.2" stroke="#2e353b" stroke-width="1.9" stroke-linecap="round"/><path d="M1273.5,127 L1268.3,127.2 L1270.2,129.1 L1267.3,132 L1268.6,133.3 L1271.5,130.4 L1273.4,132.3Z" fill="#74838f"/><path d="M1260,140.5 L1265.2,140.3 L1263.3,138.4 L1266.2,135.5 L1264.9,134.2 L1262,137.1 L1260.1,135.2Z" fill="#74838f"/><rect x="38" y="185" width="9" height="9" fill="#2e353b"/><path d="M40.6,185 V194 M43.4,185 V194 M38,187.8 H47 M38,190.5 H47" stroke="#fff" stroke-width="0.45" opacity="0.7"/><path d="M83.8,188.3 L86.2,190.8 L88.6,188.3" fill="none" stroke="#2e353b" stroke-width="1"/><path d="M104.92,187.22 L107.04,187.18 L107.04,188.82 L104.92,188.78 L104.33,190.22 L105.85,191.69 L104.69,192.85 L103.22,191.33 L101.78,191.92 L101.82,194.04 L100.18,194.04 L100.22,191.92 L98.78,191.33 L97.31,192.85 L96.15,191.69 L97.67,190.22 L97.08,188.78 L94.96,188.82 L94.96,187.18 L97.08,187.22 L97.67,185.78 L96.15,184.31 L97.31,183.15 L98.78,184.67 L100.22,184.08 L100.18,181.96 L101.82,181.96 L101.78,184.08 L103.22,184.67 L104.69,183.15 L105.85,184.31 L104.33,185.78Z M102.7,188 A1.7,1.7 0 1,0 99.3,188 A1.7,1.7 0 1,0 102.7,188Z" fill="#2e353b" fill-rule="evenodd"/><path d="M638.6,182.5 A4.5,4.5 0 1,0 639.3,186.5" fill="none" stroke="#74838f" stroke-width="1.5"/><path d="M639.4,180.1 L639.4,184.6 L635.1,184.4Z" fill="#74838f"/><rect x="1128.3" y="180.4" width="8.6" height="8" fill="none" stroke="#b4bec5" stroke-width="1"/><path d="M1128.3,182.6 H1136.9 M1128.3,185 H1136.9 M1131.2,182.6 V188.4 M1134,182.6 V188.4" stroke="#b4bec5" stroke-width="0.8"/><rect x="1128" y="180.1" width="9.2" height="2.2" fill="#b4bec5"/><rect x="1250.4" y="179" width="2.7" height="7.5" fill="#509ee3"/><path d="M1248,185.9 H1256 L1252.7,189.6 Z" fill="#509ee3"/><path d="M1273.4,182.3 H1272.3 Q1271.1,182.3 1271.1,183.5 V190 Q1271.1,191.1 1272.2,191.1 H1280.1 Q1281.2,191.1 1281.2,190 V183.5 Q1281.2,182.3 1280,182.3 H1278.9" fill="none" stroke="#2e353b" stroke-width="1.7"/><path d="M1276.1,179.5 V186.8" stroke="#2e353b" stroke-width="1.5" stroke-linecap="round"/><path d="M1273.7,181 L1276.1,177.4 L1278.5,181Z" fill="#2e353b"/><rect x="40.8" y="217" width="1" height="11" fill="#4c5773"/><path d="M1276,247 H1283 L1279.5,243.2Z" fill="#a3a3a3"/><path d="M1276,587 H1283 L1279.5,591.2Z" fill="#505050"/></svg>
<div id="pop"></div>
<div style="position:absolute;left:0;top:0;width:1303px;height:599px;z-index:12;will-change:transform">
<div class="t sk" style="left:1092.00px;top:213.77px;font-size:11.05px;line-height:14px;font-weight:400;color:#262c31;transform:scaleX(0.9245);">Descarga los resultados</div>
<div class="t sk" style="left:1092.00px;top:224.97px;font-size:11.05px;line-height:14px;font-weight:400;color:#262c31;transform:scaleX(0.9444);">completos</div>
<div class="t" style="left:1121.70px;top:255.12px;font-size:11.5px;line-height:14px;font-weight:700;color:#3a4046;transform:scaleX(0.8831);">.csv</div>
<div class="t" style="left:1121.70px;top:288.02px;font-size:11.5px;line-height:14px;font-weight:700;color:#3a4046;transform:scaleX(0.8632);">.xlsx</div>
<div class="t" style="left:1121.70px;top:320.82px;font-size:11.5px;line-height:14px;font-weight:700;color:#3a4046;transform:scaleX(0.8877);">.json</div>
<svg class="ov" width="1303" height="599" viewBox="0 0 1303 599"><path d="M1245.3,195.2 L1253,188.0 L1260.7,195.2Z" fill="#fff"/><path d="M1245.3,194.7 L1253,187.9 L1260.7,194.7" fill="none" stroke="#d9dee2" stroke-width="1"/><path d="M1095.2,248.5 H1107.3999999999999 L1112.6,253.7 V270.8 Q1112.6,272.0 1111.3999999999999,272.0 H1095.2 Q1094,272.0 1094,270.8 V249.7 Q1094,248.5 1095.2,248.5Z" fill="#7172ad"/><path d="M1107.3999999999999,248.5 L1112.6,253.7 H1107.3999999999999Z" fill="#fff" opacity="0.7"/><rect x="1097.2" y="258.1" width="6" height="1.8" fill="#fff" opacity="0.9"/><rect x="1104.6" y="258.1" width="1.8" height="1.8" fill="#fff" opacity="0.9"/><rect x="1107.6" y="258.1" width="1.8" height="1.8" fill="#fff" opacity="0.9"/><rect x="1097.2" y="261.3" width="6" height="1.8" fill="#fff" opacity="0.9"/><rect x="1104.6" y="261.3" width="1.8" height="1.8" fill="#fff" opacity="0.9"/><rect x="1107.6" y="261.3" width="1.8" height="1.8" fill="#fff" opacity="0.9"/><rect x="1097.2" y="264.5" width="6" height="1.8" fill="#fff" opacity="0.9"/><rect x="1104.6" y="264.5" width="1.8" height="1.8" fill="#fff" opacity="0.9"/><rect x="1107.6" y="264.5" width="1.8" height="1.8" fill="#fff" opacity="0.9"/><path d="M1095.2,281.8 H1107.3999999999999 L1112.6,287.0 V304.1 Q1112.6,305.3 1111.3999999999999,305.3 H1095.2 Q1094,305.3 1094,304.1 V283.0 Q1094,281.8 1095.2,281.8Z" fill="#8fbc6f"/><path d="M1107.3999999999999,281.8 L1112.6,287.0 H1107.3999999999999Z" fill="#fff" opacity="0.7"/><text x="1098.4" y="300.6" font-family="Liberation Sans" font-style="italic" font-size="14" fill="#fff">x</text><path d="M1095.2,314.8 H1107.3999999999999 L1112.6,320.0 V337.1 Q1112.6,338.3 1111.3999999999999,338.3 H1095.2 Q1094,338.3 1094,337.1 V316.0 Q1094,314.8 1095.2,314.8Z" fill="#8d9ba7"/><path d="M1107.3999999999999,314.8 L1112.6,320.0 H1107.3999999999999Z" fill="#fff" opacity="0.7"/><text x="1097.9" y="332.40000000000003" font-family="Liberation Sans" font-weight="bold" font-size="10" letter-spacing="0.8" fill="#fff">{}</text></svg>
</div>
</body></html>
